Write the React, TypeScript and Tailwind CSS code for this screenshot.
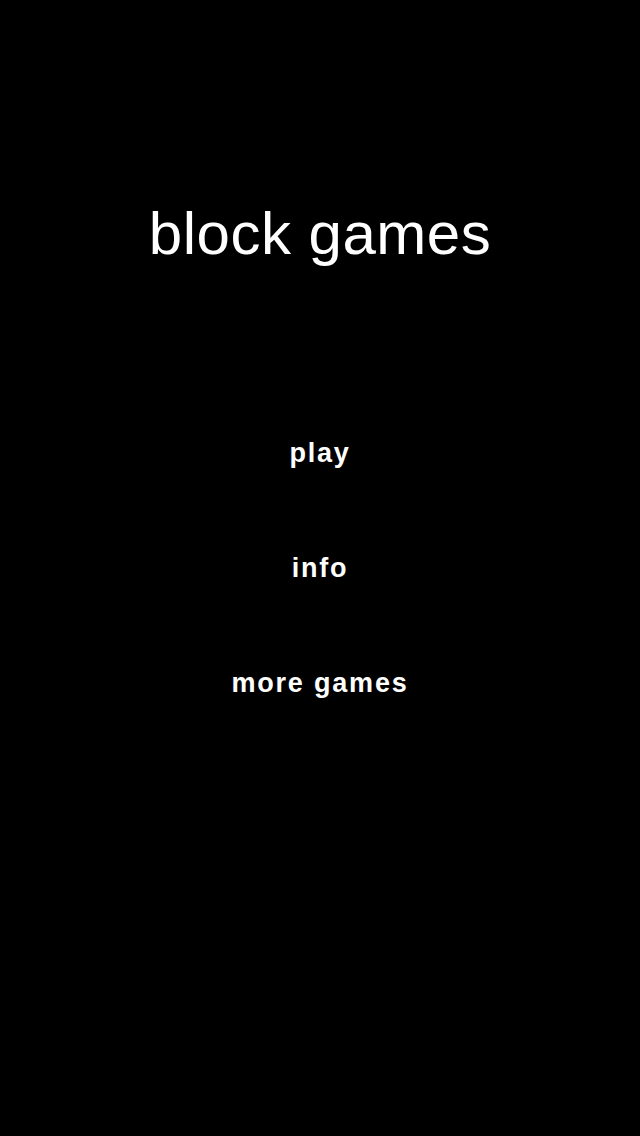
export default function App() {
  return (
    <div
      className="flex min-h-[1136px] w-[640px] flex-col items-center bg-black text-white"
      style={{ fontFamily: '"Liberation Sans", Arial, sans-serif' }}
    >
      <h1 className="mt-[198px] text-[60px] font-normal leading-[72px] tracking-[0.5px]">block games</h1>
      <nav className="mt-[168px] flex flex-col items-center gap-[85px]">
        <button className="text-[27px] font-bold leading-[30px] tracking-[1.8px]">play</button>
        <button className="text-[27px] font-bold leading-[30px] tracking-[1.8px]">info</button>
        <button className="text-[27px] font-bold leading-[30px] tracking-[1.8px]">more games</button>
      </nav>
    </div>
  );
}
